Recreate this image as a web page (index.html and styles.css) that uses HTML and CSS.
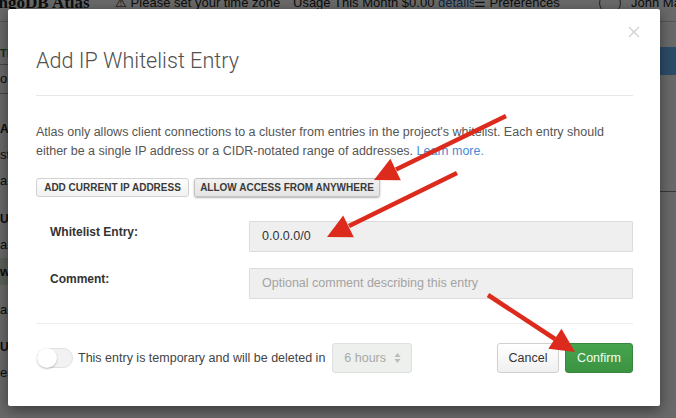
FILE: index.html
```html
<!DOCTYPE html>
<html lang="en">
<head>
<meta charset="utf-8">
<title>Add IP Whitelist Entry</title>
<link rel="stylesheet" href="styles.css">
</head>
<body>
<div class="page">
  <header class="topbar">
    <span class="logo">MongoDB Atlas</span>
    <span class="hdr-item">&#9888; Please set your time zone</span>
    <span class="hdr-item">Usage This Month $0.00 <span class="hdr-link">details</span></span>
    <span class="hdr-item">&#9776; Preferences</span>
    <span class="hdr-item hdr-user"><span class="hdr-avatar"></span>John Maintee</span>
  </header>
  <div class="page-body">
    <nav class="sidebar">
      <div class="side-section">TE</div>
      <div class="side-item side-item-top">o</div>
      <div class="side-head">AS</div>
      <div class="side-item">ste</div>
      <div class="side-item">a I</div>
      <div class="side-head side-gap">U</div>
      <div class="side-item">ab</div>
      <div class="side-item side-active">w</div>
      <div class="side-item side-mid">ar</div>
      <div class="side-head side-gap2">UE</div>
      <div class="side-item">es</div>
    </nav>
    <main class="main">
      <div class="main-bar"></div>
      <div class="main-rule"></div>
    </main>
  </div>
</div>

<div class="overlay"></div>

<div class="modal" role="dialog" aria-labelledby="modal-title">
  <button class="modal-close" aria-label="Close">
    <svg width="12" height="12" viewBox="0 0 12 12"><path d="M1 1L11 11M11 1L1 11" stroke="#cfcfcf" stroke-width="1.3" fill="none"/></svg>
  </button>
  <div class="modal-header">
    <h2 class="modal-title" id="modal-title">Add IP Whitelist Entry</h2>
  </div>
  <div class="modal-body">
    <p class="intro">Atlas only allows client connections to a cluster from entries in the project's whitelist. Each entry should either be a single IP address or a CIDR-notated range of addresses. <a class="link" href="#">Learn more.</a></p>
    <div class="quick-actions">
      <button class="btn-sm btn-current">Add current IP address</button>
      <button class="btn-sm btn-anywhere is-active">Allow access from anywhere</button>
    </div>
    <div class="form">
      <div class="form-row">
        <label class="form-label">Whitelist Entry:</label>
        <div class="field">0.0.0.0/0</div>
      </div>
      <div class="form-row">
        <label class="form-label">Comment:</label>
        <div class="field field-placeholder">Optional comment describing this entry</div>
      </div>
    </div>
  </div>
  <div class="modal-footer">
    <div class="temp">
      <span class="toggle"><span class="knob"></span></span>
      <span class="temp-text">This entry is temporary and will be deleted in</span>
      <span class="select">6 hours
        <svg class="select-caret" width="7" height="12" viewBox="0 0 7 12"><path d="M3.5 1L6.5 5H0.5Z M3.5 11L6.5 7H0.5Z" fill="#b9bcb9"/></svg>
      </span>
    </div>
    <div class="actions">
      <button class="btn btn-cancel">Cancel</button>
      <button class="btn btn-primary">Confirm</button>
    </div>
  </div>
</div>

<svg class="arrows" width="676" height="418" viewBox="0 0 676 418" aria-hidden="true">
  <g fill="#dc2a1c" stroke="#dc2a1c">
    <line x1="506" y1="116" x2="396" y2="169.5" stroke-width="4.5"/>
    <polygon points="374,180 400.8,180.3 390.4,158.7" stroke="none"/>
    <line x1="457" y1="173" x2="349" y2="226" stroke-width="4.5"/>
    <polygon points="327,237 353.8,237.2 343.2,215.6" stroke="none"/>
    <line x1="488" y1="295" x2="555" y2="339" stroke-width="4.5"/>
    <polygon points="575,352 548.3,348.8 561.5,328.8" stroke="none"/>
  </g>
</svg>
</body>
</html>
```

FILE: styles.css
```css
* { box-sizing: border-box; }

html, body {
  margin: 0;
  padding: 0;
}

body {
  width: 676px;
  height: 418px;
  overflow: hidden;
  position: relative;
  background: #fff;
  font-family: "Liberation Sans", Arial, sans-serif;
  color: #333;
}

/* ---------- page behind the modal ---------- */
.page {
  height: 100%;
  display: flex;
  flex-direction: column;
}

.topbar {
  height: 22px;
  display: grid;
  grid-template-columns: 115px 178px 181px 125px 1fr;
  align-items: start;
  border-bottom: 1px solid #ccc;
  font-size: 13px;
  line-height: 14px;
  color: #222;
  white-space: nowrap;
  overflow: hidden;
}

.topbar > span {
  margin-top: -4px;
  overflow: hidden;
}

.logo {
  font-family: "Liberation Serif", serif;
  font-size: 17px;
  font-weight: bold;
  text-indent: -26px;
}

.hdr-link { color: #1f5fa8; }

.hdr-user { display: flex; gap: 10px; }

.hdr-avatar {
  flex: none;
  width: 22px;
  height: 22px;
  border: 1px solid #555;
  border-radius: 50%;
  margin-top: -4px;
}

.page-body {
  flex: 1;
  display: flex;
}

.sidebar {
  width: 180px;
  display: flex;
  flex-direction: column;
  font-size: 13px;
  color: #222;
}

.side-section {
  padding-top: 24px;
  height: 43px;
  line-height: 14px;
  font-size: 11px;
  font-weight: bold;
  color: #2f7a2f;
  border-bottom: 1px solid #aaa;
}

.side-item {
  height: 26px;
  line-height: 26px;
}

.side-item-top {
  height: 29px;
  line-height: 28px;
  border-bottom: 1px solid #aaa;
}

.side-head {
  margin-top: 22px;
  height: 26px;
  line-height: 26px;
  font-weight: bold;
  font-size: 12px;
}

.side-gap { margin-top: 12px; }
.side-gap2 { margin-top: 11px; }

.side-active {
  height: 27px;
  line-height: 27px;
  font-weight: bold;
  background: #d9ecd9;
}

.side-mid { margin-top: 12px; }

.main {
  flex: 1;
  display: flex;
  flex-direction: column;
  align-items: flex-end;
}

.main-bar {
  margin-top: 25px;
  width: 40px;
  height: 28px;
  background: #6eb8ff;
}

.main-rule {
  margin-top: 116px;
  align-self: stretch;
  border-top: 1px solid #888;
}

.overlay {
  position: absolute;
  inset: 0;
  background: rgba(0, 0, 0, 0.59);
}

/* ---------- modal ---------- */
.modal {
  position: absolute;
  left: 8px;
  top: 9px;
  width: 652px;
  height: 397px;
  background: #fff;
  border-radius: 2px;
  box-shadow: 0 4px 14px rgba(0, 0, 0, 0.45);
  display: flex;
  flex-direction: column;
}

.modal-close {
  position: absolute;
  top: 16px;
  right: 19px;
  width: 14px;
  height: 14px;
  padding: 0;
  border: 0;
  background: none;
  display: flex;
  align-items: center;
  justify-content: center;
}

.modal-header {
  margin: 0 27px 0 28px;
  padding: 39px 0 21px;
  border-bottom: 1px solid #e8e8e8;
}

.modal-title {
  margin: 0;
  font-family: Roboto, "Liberation Sans", sans-serif;
  font-weight: 300;
  font-size: 21.6px;
  line-height: 26px;
  color: #505050;
}

.modal-body {
  padding: 0 27px 0 28px;
}

.intro {
  margin: 27px 0 17px;
  font-size: 12.5px;
  line-height: 19px;
  color: #555;
}

.link {
  color: #4a8bd4;
  text-decoration: none;
}

.quick-actions {
  display: flex;
  gap: 5px;
}

.btn-sm {
  height: 19px;
  padding: 0;
  font-family: "Liberation Sans", Arial, sans-serif;
  font-size: 10px;
  font-weight: bold;
  line-height: 17px;
  text-transform: uppercase;
  color: #3a3a3a;
  background: linear-gradient(#fdfdfd, #f1f1f1);
  border: 1px solid #d2d2d2;
  border-radius: 3px;
  white-space: nowrap;
}

.btn-current { width: 153px; }
.btn-anywhere { width: 186px; }

.btn-sm.is-active {
  background: linear-gradient(#f1f1f1, #e4e4e4);
  border-color: #c4c4c4;
  box-shadow: 0 1px 2px rgba(0, 0, 0, 0.3);
}

.form {
  margin-top: 24px;
  display: flex;
  flex-direction: column;
  gap: 16px;
}

.form-row {
  display: flex;
  align-items: flex-start;
}

.form-label {
  width: 213px;
  padding: 3px 0 0 14px;
  font-size: 12px;
  font-weight: bold;
  line-height: 17px;
  color: #333;
}

.field {
  flex: 1;
  height: 31px;
  padding-left: 12px;
  line-height: 29px;
  font-size: 12.5px;
  color: #333;
  background: #efefef;
  border: 1px solid #dcdcdc;
  border-radius: 1px;
}

.field-placeholder { color: #a3a3a3; }

.modal-footer {
  margin: 24px 27px 0 28px;
  padding-top: 19px;
  border-top: 1px solid #eeeeee;
  display: flex;
  justify-content: space-between;
  align-items: center;
}

.temp {
  display: flex;
  align-items: center;
}

.toggle {
  width: 36px;
  height: 20px;
  margin-left: 1px;
  border-radius: 10px;
  background: #f2f2f2;
  border: 1px solid #e0e0e0;
  position: relative;
}

.knob {
  position: absolute;
  left: -1px;
  top: -1px;
  width: 20px;
  height: 20px;
  border-radius: 50%;
  background: #fff;
  box-shadow: 0 1px 2px rgba(0, 0, 0, 0.25);
}

.temp-text {
  margin-left: 5px;
  font-size: 12.5px;
  color: #444;
}

.select {
  margin-left: 7px;
  width: 80px;
  height: 30px;
  padding: 0 10px 0 11px;
  display: flex;
  align-items: center;
  justify-content: space-between;
  font-size: 12.5px;
  color: #a8aaa8;
  background: #edf0ed;
  border: 1px solid #dde1dd;
  border-radius: 3px;
}

.actions {
  display: flex;
  gap: 6px;
}

.btn {
  height: 30px;
  padding: 0;
  font-family: "Liberation Sans", Arial, sans-serif;
  font-size: 12.5px;
  color: #333;
  background: linear-gradient(#ffffff, #f0f0f0);
  border: 1px solid #cfcfcf;
  border-radius: 3px;
}

.btn-cancel { width: 62px; }

.btn-primary {
  width: 68px;
  color: #f3fff3;
  background: linear-gradient(#46a44d, #3b9342);
  border-color: #37873d;
}

.arrows {
  position: absolute;
  left: 0;
  top: 0;
  pointer-events: none;
}
```
